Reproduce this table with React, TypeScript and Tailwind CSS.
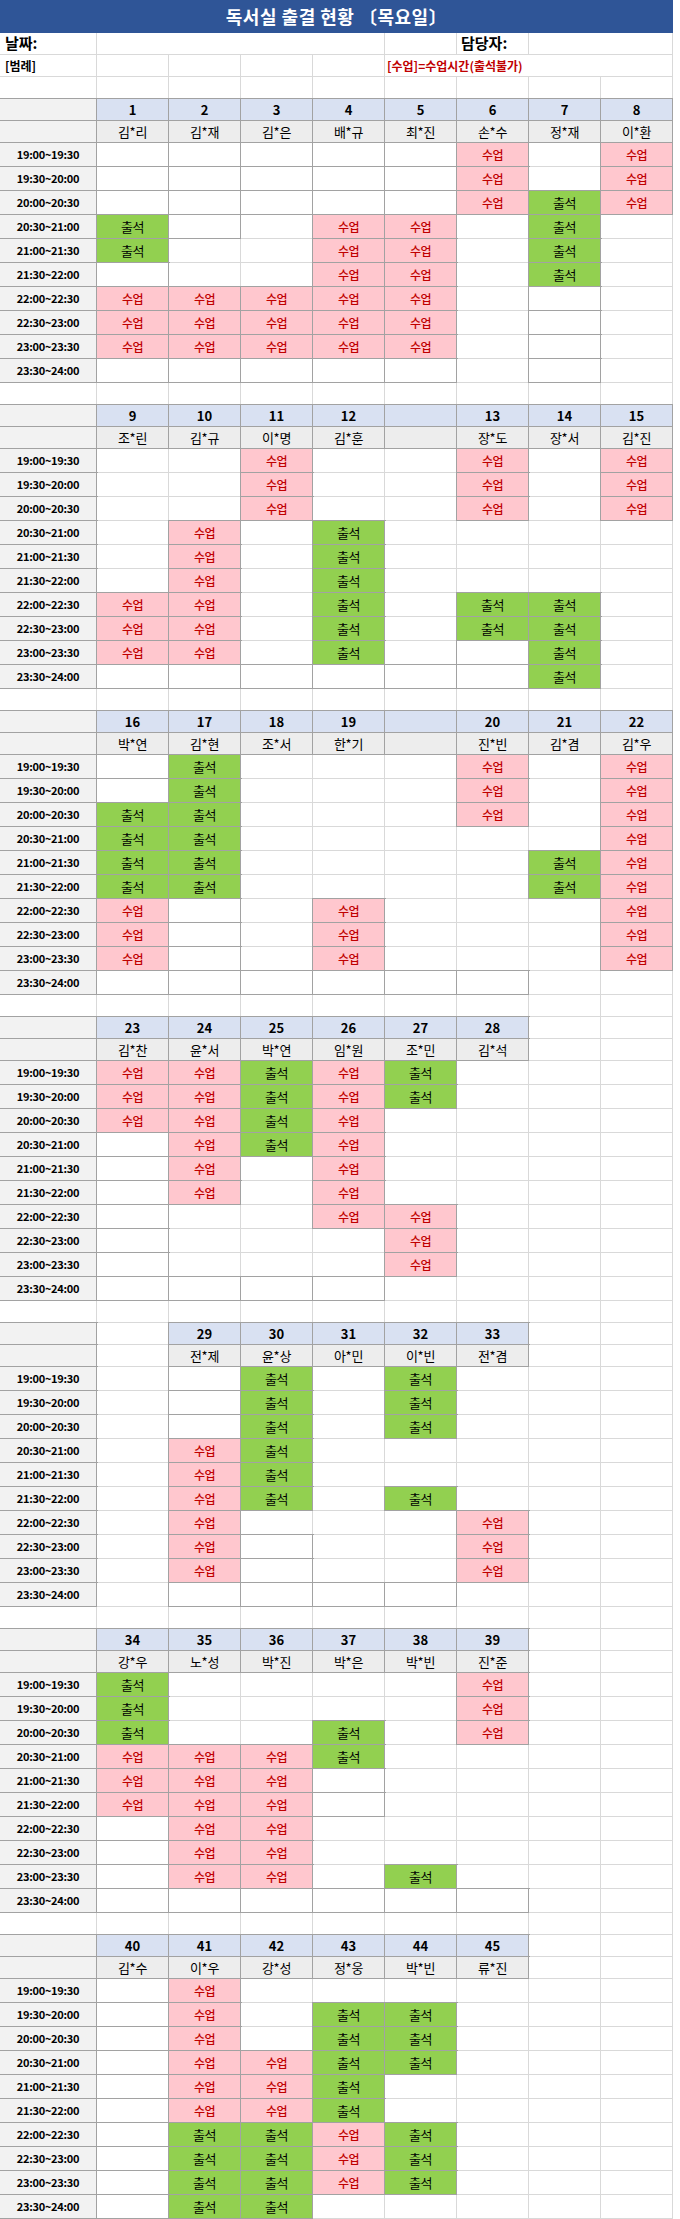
import React from "react";

type Section = {
  nums: (number | "" | null)[];
  names: (string | null)[];
  rows: string[];
};

const TIMES = [
  "19:00~19:30",
  "19:30~20:00",
  "20:00~20:30",
  "20:30~21:00",
  "21:00~21:30",
  "21:30~22:00",
  "22:00~22:30",
  "22:30~23:00",
  "23:00~23:30",
  "23:30~24:00",
];

// . = 빈칸, b = 테두리만, x = 수업, o = 출석
const SECTIONS: Section[] = [
  {
    nums: [1, 2, 3, 4, 5, 6, 7, 8],
    names: ["김*리", "김*재", "김*은", "배*규", "최*진", "손*수", "정*재", "이*환"],
    rows: ["bbbbbx.x", "bbbbbx.x", "bbbbbxox", "ob.xx.o.", "o..xx.o.", "b..xx.o.", "xxxxx.b.", "xxxxx.b.", "xxxxx.b.", "bbbbb.b."],
  },
  {
    nums: [9, 10, 11, 12, "", 13, 14, 15],
    names: ["조*린", "김*규", "이*명", "김*훈", "", "장*도", "장*서", "김*진"],
    rows: ["..x..x.x", "..x..x.x", "..x..x.x", ".x.o....", ".x.o....", ".x.o....", "xx.o.oo.", "xx.o.oo.", "xx.o.bo.", "bbbbbbo."],
  },
  {
    nums: [16, 17, 18, 19, "", 20, 21, 22],
    names: ["박*연", "김*현", "조*서", "한*기", "", "진*빈", "김*겸", "김*우"],
    rows: ["bo...x.x", "bo...x.x", "oo...x.x", "oo.....x", "oo....ox", "oo....ox", "xb.x...x", "xb.x...x", "xb.x...x", "bbbbbb.."],
  },
  {
    nums: [23, 24, 25, 26, 27, 28, null, null],
    names: ["김*찬", "윤*서", "박*연", "임*원", "조*민", "김*석", null, null],
    rows: ["xxoxo...", "xxoxo...", "xxox....", "bxox....", "bx.x....", "bx.x....", "b..xx...", "b...x...", "b...x...", "bbbb...."],
  },
  {
    nums: [null, 29, 30, 31, 32, 33, null, null],
    names: [null, "전*제", "윤*상", "아*민", "이*빈", "전*겸", null, null],
    rows: [".bo.o...", ".bo.o...", ".bo.o...", ".xo.....", ".xo.....", ".xo.o...", ".x...x..", ".xb..x..", ".xb..x..", ".bbbb..."],
  },
  {
    nums: [34, 35, 36, 37, 38, 39, null, null],
    names: ["강*우", "노*성", "박*진", "박*은", "박*빈", "진*준", null, null],
    rows: ["o....x..", "o....x..", "o..o.x..", "xxxo....", "xxxb....", "xxxb....", "bxx.....", "bxx.....", "bxx.o...", "bbbbbb.."],
  },
  {
    nums: [40, 41, 42, 43, 44, 45, null, null],
    names: ["김*수", "이*우", "강*성", "정*웅", "박*빈", "류*진", null, null],
    rows: ["bx......", "bx.oo...", "bx.oo...", "bxxoo...", "bxxo....", "bxxo....", "booxo...", "booxo...", "booxo...", "boo....."],
  },
];

const plain = "border-r border-b border-[#d9d9d9] bg-white";
const framed = "border-r border-b border-[#a2a2a2] shadow-[0_0_0_1px_#a2a2a2]";

function EmptyRow({ tall }: { tall?: boolean }) {
  return (
    <>
      {Array.from({ length: 9 }).map((_, i) => (
        <div key={i} className={`${tall ? "h-[24px]" : "h-[22px]"} ${plain}`} />
      ))}
    </>
  );
}

function Mark({ c }: { c: string }) {
  if (c === "x")
    return (
      <div className={`h-[24px] flex items-center justify-center bg-[#ffc7ce] ${framed}`}>
        <span className="text-[12px] font-medium tracking-[-0.5px] text-[#c00000]">수업</span>
      </div>
    );
  if (c === "o")
    return (
      <div className={`h-[24px] flex items-center justify-center bg-[#92d050] ${framed}`}>
        <span className="text-[13px] tracking-[-0.5px] text-black">출석</span>
      </div>
    );
  if (c === "b") return <div className={`h-[24px] bg-white ${framed}`} />;
  return <div className={`h-[24px] ${plain}`} />;
}

function Block({ s }: { s: Section }) {
  return (
    <>
      <div className={`h-[22px] bg-[#f2f2f2] ${framed}`} />
      {s.nums.map((n, i) =>
        n === null ? (
          <div key={i} className={`h-[22px] ${plain}`} />
        ) : (
          <div key={i} className={`h-[22px] flex items-center justify-center bg-[#d9e1f2] text-[13px] font-bold ${framed}`}>
            {n}
          </div>
        )
      )}
      <div className={`h-[22px] bg-[#f2f2f2] ${framed}`} />
      {s.names.map((n, i) =>
        n === null ? (
          <div key={i} className={`h-[22px] ${plain}`} />
        ) : (
          <div key={i} className={`h-[22px] flex items-center justify-center bg-[#ededed] text-[13px] tracking-[-0.3px] ${framed}`}>
            {n}
          </div>
        )
      )}
      {TIMES.map((t, r) => (
        <React.Fragment key={t}>
          <div className={`h-[24px] flex items-center justify-center bg-[#f2f2f2] text-[11px] font-bold tracking-[-0.3px] ${framed}`}>
            {t}
          </div>
          {s.rows[r].split("").map((c, i) => (
            <Mark key={i} c={c} />
          ))}
        </React.Fragment>
      ))}
    </>
  );
}

export default function App() {
  return (
    <div className="w-[680px] bg-white text-black font-['Noto_Sans_CJK_KR',sans-serif]">
      <div className="w-[673px] overflow-hidden grid grid-cols-[97px_repeat(8,72px)]">
        <div className="col-span-9 h-[33px] bg-[#2f5597] flex items-center justify-center">
          <span className="text-[18px] font-bold text-white tracking-[0.5px]">독서실 출결 현황 〔목요일〕</span>
        </div>

        <div className={`h-[22px] flex items-center pl-[5px] text-[15px] font-bold ${plain}`}>날짜:</div>
        <div className={`col-span-4 h-[22px] ${plain}`} />
        <div className={`h-[22px] ${plain}`} />
        <div className={`h-[22px] flex items-center pl-[4px] text-[15px] font-bold ${plain}`}>담당자:</div>
        <div className={`col-span-2 h-[22px] ${plain}`} />

        <div className={`h-[22px] flex items-center pl-[5px] text-[12px] font-bold ${plain}`}>[범례]</div>
        <div className={`h-[22px] ${plain}`} />
        <div className={`h-[22px] ${plain}`} />
        <div className={`h-[22px] ${plain}`} />
        <div className={`h-[22px] ${plain}`} />
        <div className={`col-span-4 h-[22px] flex items-center pl-[2px] text-[12px] font-bold text-[#c00000] whitespace-nowrap ${plain}`}>
          [수업]=수업시간(출석불가)
        </div>

        <EmptyRow />

        {SECTIONS.map((s, i) => (
          <React.Fragment key={i}>
            <Block s={s} />
            {i < SECTIONS.length - 1 && <EmptyRow />}
          </React.Fragment>
        ))}
      </div>
    </div>
  );
}
